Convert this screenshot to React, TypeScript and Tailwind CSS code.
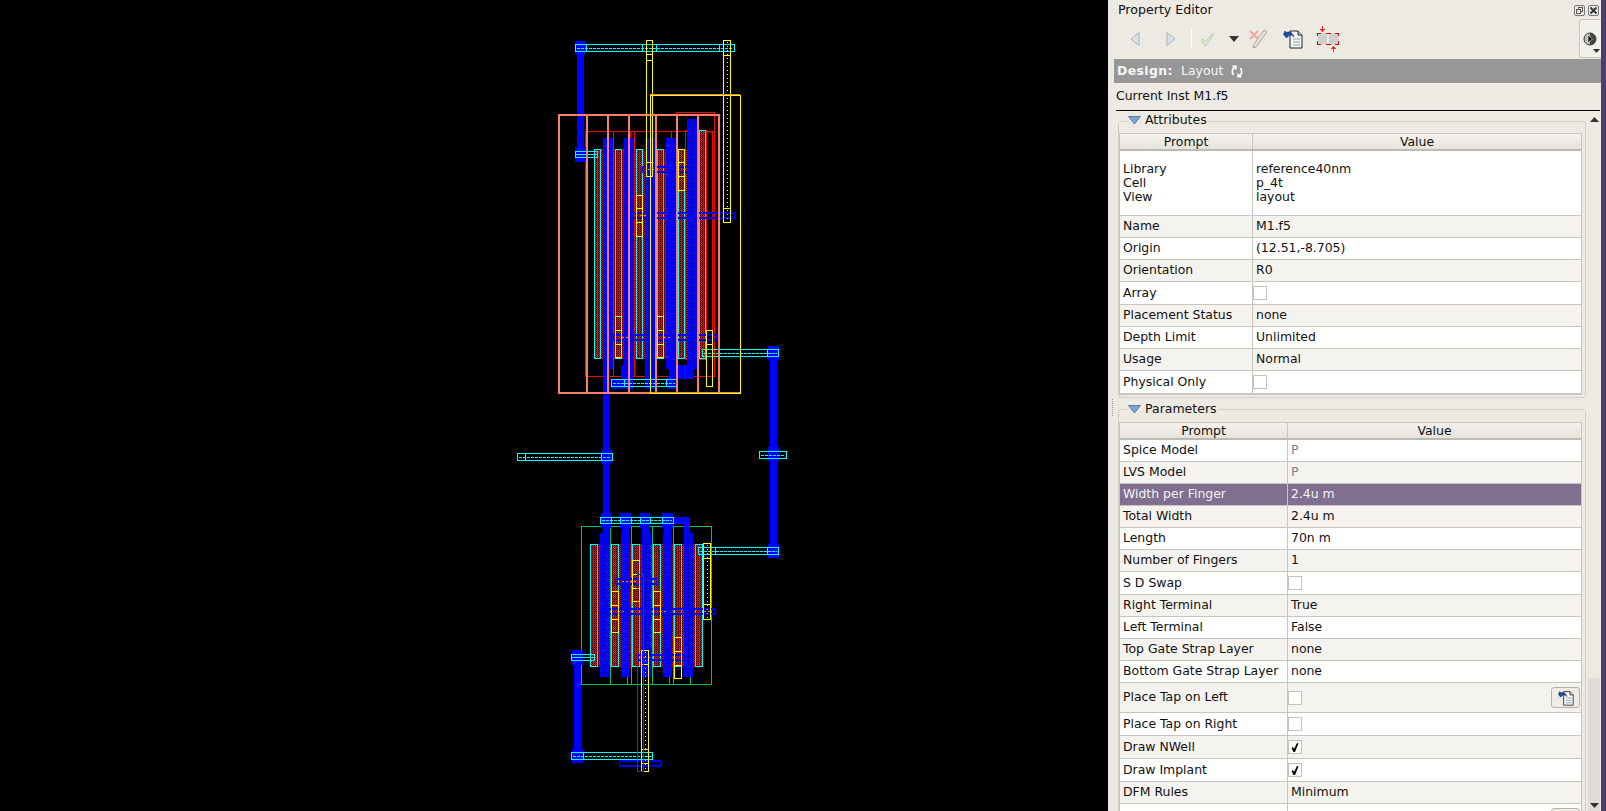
import type { ReactNode } from "react";

const FONT = "font-['DejaVu_Sans',sans-serif]";

type Box = [number, number, number, number];

const CYAN = "#00ffff";
const YELLOW = "#ffff00";
const BLUE = "#0000ff";
const RED = "#ff0000";
const SALMON = "#fa7d6e";
const GREEN = "#00c060";

// x1, y1, x2, y2 for everything below
const topDiff: Box[] = [
  [594, 149, 601, 359],
  [615, 149, 622, 359],
  [636, 149, 643, 359],
  [657, 149, 664, 359],
  [678, 149, 685, 359],
  [699, 130, 706, 359],
];
const topFingers: Box[] = [
  [603, 138, 613, 369],
  [624, 138, 634, 369],
  [645, 138, 655, 369],
  [666, 138, 676, 369],
  [687, 119, 697, 369],
];
const botDiff: Box[] = [
  [590, 544, 598, 667],
  [611, 544, 619, 667],
  [632, 544, 640, 667],
  [653, 544, 661, 667],
  [674, 544, 682, 667],
  [695, 544, 703, 667],
];
const botFingers: Box[] = [
  [600, 533, 609, 677],
  [621, 533, 630, 677],
  [642, 533, 651, 677],
  [663, 533, 672, 677],
  [684, 533, 693, 677],
];
const solidBlue: Box[] = [
  [577, 55, 584, 147],
  [575, 41, 586, 55],
  [575, 147, 586, 162],
  [603, 369, 610, 518],
  [601, 450, 612, 464],
  [621, 365, 633, 389],
  [645, 365, 655, 389],
  [667, 376, 677, 389],
  [669, 365, 694, 379],
  [611, 379, 624, 389],
  [770, 360, 777, 545],
  [768, 346, 779, 360],
  [768, 447, 779, 461],
  [768, 544, 779, 558],
  [603, 527, 609, 533],
  [622, 527, 629, 533],
  [642, 527, 649, 533],
  [664, 527, 671, 533],
  [601, 513, 611, 528],
  [620, 513, 631, 528],
  [640, 513, 650, 528],
  [662, 513, 673, 528],
  [674, 517, 690, 524],
  [684, 518, 690, 533],
  [574, 665, 581, 749],
  [572, 650, 583, 665],
  [572, 749, 583, 763],
];
const thinBlue: Box[] = [
  [642, 166, 689, 173],
  [630, 212, 735, 219],
  [613, 334, 717, 341],
  [615, 578, 657, 585],
  [600, 608, 715, 615],
  [638, 654, 684, 661],
  [619, 760, 661, 767],
];
const cyanStraps: Box[] = [
  [575, 44, 735, 52],
  [611, 379, 677, 387],
  [702, 349, 779, 357],
  [759, 451, 787, 459],
  [698, 547, 779, 555],
  [517, 453, 613, 461],
  [600, 517, 674, 524],
  [571, 752, 653, 760],
];
const cyanShort: Box[] = [
  [575, 151, 598, 158],
  [571, 654, 595, 661],
];
const cyanTicks: number[][] = [
  [586, 44, 52],
  [642, 44, 52],
  [656, 44, 52],
  [719, 44, 52],
  [624, 379, 387],
  [666, 379, 387],
  [718, 349, 357],
  [767, 349, 357],
  [698, 547, 555],
  [715, 547, 555],
  [767, 547, 555],
  [525, 453, 461],
  [601, 453, 461],
  [611, 517, 524],
  [620, 517, 524],
  [631, 517, 524],
  [640, 517, 524],
  [650, 517, 524],
  [662, 517, 524],
  [583, 752, 760],
];
const yellowBoxes: Box[] = [
  [678, 149, 685, 191],
  [636, 195, 643, 237],
  [615, 316, 622, 358],
  [657, 316, 664, 358],
  [706, 330, 713, 387],
  [646, 40, 653, 177],
  [646, 40, 653, 55],
  [646, 162, 653, 177],
  [611, 591, 619, 633],
  [632, 560, 640, 602],
  [653, 591, 661, 633],
  [674, 637, 682, 679],
];
const yellowTicks: number[][] = [
  [678, 685, 162],
  [678, 685, 176],
  [636, 643, 208],
  [636, 643, 222],
  [615, 622, 330],
  [615, 622, 344],
  [657, 664, 330],
  [657, 664, 344],
  [706, 713, 344],
  [646, 653, 60],
  [723, 731, 55],
  [723, 731, 208],
  [611, 619, 605],
  [611, 619, 619],
  [632, 640, 574],
  [632, 640, 588],
  [653, 661, 605],
  [653, 661, 619],
  [674, 682, 651],
  [674, 682, 665],
  [703, 711, 558],
  [703, 711, 604],
  [641, 649, 664],
  [641, 649, 749],
  [641, 649, 763],
];
const yellowDotted: Box[] = [
  [723, 40, 731, 223],
  [703, 543, 711, 620],
  [641, 650, 649, 772],
];
const redBoxes: Box[] = [
  [585, 131, 713, 377],
  [676, 112, 715, 377],
  [685, 130, 707, 360],
  [613, 131, 631, 377],
  [634, 131, 672, 377],
];
const salmonV = [558, 586, 607, 628, 655, 676, 697, 718];

function Outline({ b, color }: { b: Box; color: string }) {
  return (
    <rect
      x={b[0] + 0.5}
      y={b[1] + 0.5}
      width={b[2] - b[0] - 1}
      height={b[3] - b[1] - 1}
      fill="none"
      stroke={color}
    />
  );
}

function Fill({ b, fill }: { b: Box; fill: string }) {
  return <rect x={b[0]} y={b[1]} width={b[2] - b[0]} height={b[3] - b[1]} fill={fill} />;
}

function HStrap({ b, color }: { b: Box; color: string }) {
  const mid = Math.floor((b[1] + b[3]) / 2) + 0.5;
  return (
    <g>
      <Outline b={b} color={color} />
      <line x1={b[0] + 2} x2={b[2] - 2} y1={mid} y2={mid} stroke={color} strokeDasharray="3 1" />
    </g>
  );
}

function LayoutView() {
  return (
    <svg viewBox="0 0 1108 811" className="block h-[811px] w-[1108px]" shapeRendering="crispEdges">
      <defs>
        {/* diffusion: red diagonals with a few teal pixels on black */}
        <pattern id="hatch" width="4" height="4" patternUnits="userSpaceOnUse">
          <rect width="4" height="4" fill="#000" />
          <rect x="0" y="0" width="1" height="1" fill={RED} />
          <rect x="1" y="1" width="1" height="1" fill={RED} />
          <rect x="2" y="2" width="1" height="1" fill={RED} />
          <rect x="3" y="3" width="1" height="1" fill={RED} />
          <rect x="2" y="0" width="1" height="1" fill={RED} />
          <rect x="3" y="1" width="1" height="1" fill="#0e8a8a" />
          <rect x="0" y="2" width="1" height="1" fill={RED} />
          <rect x="1" y="3" width="1" height="1" fill="#0e8a8a" />
        </pattern>
        <pattern id="hatchRed" width="2" height="2" patternUnits="userSpaceOnUse">
          <rect width="2" height="2" fill="#000" />
          <rect x="0" y="0" width="1" height="1" fill={RED} />
          <rect x="1" y="1" width="1" height="1" fill={RED} />
        </pattern>
      </defs>

      {/* top device */}
      <rect x="594" y="149" width="112" height="210" fill="url(#hatchRed)" />
      {redBoxes.map((b, i) => (
        <Outline key={i} b={b} color={RED} />
      ))}
      {topDiff.map((b, i) => (
        <g key={i}>
          <Fill b={b} fill="url(#hatch)" />
          <Outline b={b} color={CYAN} />
        </g>
      ))}
      {/* bottom device */}
      <rect x="590" y="544" width="113" height="123" fill="url(#hatchRed)" />
      {botDiff.map((b, i) => (
        <g key={i}>
          <Fill b={b} fill="url(#hatch)" />
          <Outline b={b} color={CYAN} />
        </g>
      ))}

      <Outline b={[581, 526, 712, 685]} color={GREEN} />
      {[610, 631, 652, 673].map((x) => (
        <rect key={x} x={x} y="526" width="1" height="159" fill={GREEN} />
      ))}
      {[627, 669, 690].map((x) => (
        <rect key={x} x={x} y="677" width="1" height="8" fill={GREEN} />
      ))}

      {solidBlue.map((b, i) => (
        <Fill key={i} b={b} fill={BLUE} />
      ))}
      {[...topFingers, ...botFingers].map((b, i) => {
        const cx = Math.floor((b[0] + b[2]) / 2) + 0.5;
        return (
          <g key={i}>
            <Fill b={b} fill={BLUE} />
            <line x1={cx} x2={cx} y1={b[1] + 3} y2={b[3] - 3} stroke="#000" strokeDasharray="1 3" />
          </g>
        );
      })}
      <line x1="671" x2="693" y1="372.5" y2="372.5" stroke="#000" strokeDasharray="1 1" />

      {/* thin metal straps sit over the fingers, two pixels thick */}
      {thinBlue.map((b, i) => (
        <g key={i}>
          <Outline b={b} color={BLUE} />
          <rect x={b[0]} y={b[1] + 1} width={b[2] - b[0]} height="1" fill={BLUE} />
          <rect x={b[0]} y={b[3] - 2} width={b[2] - b[0]} height="1" fill={BLUE} />
        </g>
      ))}
      {/* orange where the straps cross the hatch */}
      {[
        [648, 169.5, 10],
        [640, 215.5, 8],
        [622, 337.5, 6],
        [664, 337.5, 6],
        [622, 581.5, 16],
        [618, 611.5, 6],
        [660, 611.5, 6],
        [704, 611.5, 8],
        [644, 657.5, 8],
      ].map((d, i) => (
        <line key={i} x1={d[0]} x2={d[0] + d[2]} y1={d[1]} y2={d[1]} stroke="#ff8000" strokeDasharray="2 2" />
      ))}

      {cyanStraps.map((b, i) => (
        <HStrap key={i} b={b} color={CYAN} />
      ))}
      {cyanShort.map((b, i) => (
        <g key={i}>
          <Outline b={b} color={CYAN} />
          <rect x={b[0]} y={b[1] + 3} width={b[2] - b[0]} height="1" fill={CYAN} />
        </g>
      ))}
      {cyanTicks.map((t, i) => (
        <rect key={i} x={t[0]} y={t[1]} width="1" height={t[2] - t[1]} fill={CYAN} />
      ))}

      {yellowBoxes.map((b, i) => (
        <Outline key={i} b={b} color={YELLOW} />
      ))}
      {yellowDotted.map((b, i) => {
        const cx = Math.floor((b[0] + b[2]) / 2) + 0.5;
        return (
          <g key={i}>
            <Outline b={b} color={YELLOW} />
            <line x1={cx} x2={cx} y1={b[1] + 2} y2={b[3] - 2} stroke={YELLOW} strokeDasharray="1 3" />
          </g>
        );
      })}
      {yellowTicks.map((t, i) => (
        <rect key={i} x={t[0]} y={t[2]} width={t[1] - t[0]} height="1" fill={YELLOW} />
      ))}

      <rect x="637.5" y="574.5" width="6" height="197" fill="none" stroke="#3c2fa8" />

      {/* salmon cells */}
      <rect x="558" y="114" width="161" height="2" fill={SALMON} />
      <rect x="558" y="392" width="182" height="2" fill={SALMON} />
      <rect x="650" y="94" width="90" height="2" fill={SALMON} />
      {salmonV.map((x) => (
        <rect key={x} x={x} y="114" width="2" height="279" fill={SALMON} />
      ))}
      <Outline b={[650, 95, 741, 394]} color={YELLOW} />
    </svg>
  );
}

function BackIcon({ flip }: { flip?: boolean }) {
  return (
    <svg width="14" height="16" viewBox="0 0 14 16" className={flip ? "-scale-x-100" : ""}>
      <path d="M11 1.5 L3 8 L11 14.5 Z" fill="#d8e0e8" stroke="#a8b4c0" strokeLinejoin="round" />
    </svg>
  );
}

function CheckIcon() {
  return (
    <svg width="16" height="16" viewBox="0 0 16 16">
      <path d="M2 9 L4.5 8 L6.5 11 L13.5 2.5 L14.5 3 L7.5 14.5 L5.5 14.5 Z" fill="#dcebcb" stroke="#aebfa0" strokeWidth="0.7" />
    </svg>
  );
}

function CancelIcon() {
  return (
    <svg width="20" height="20" viewBox="0 0 20 20">
      <path d="M15 1 L18 3 L7 18 L4 19 L5 15 Z" fill="#e8e4d0" stroke="#a8a498" />
      <path d="M1 2 L9 10 M9 2 L1 10" stroke="#f0a8a0" strokeWidth="2" />
    </svg>
  );
}

function UndoDocIcon({ small }: { small?: boolean }) {
  const size = small ? 16 : 20;
  return (
    <svg width={size} height={size} viewBox="0 0 20 20">
      <path d="M7 2 H15 L19 6 V19 H7 Z" fill="#f4f4f2" stroke="#222" />
      <path d="M15 2 V6 H19" fill="#ccc" stroke="#222" />
      <path d="M10 10 H17 M10 13 H17 M10 16 H17" stroke="#8aa0c0" />
      <path d="M0.5 5.5 L3.5 9 L5 7.2 C6.5 5.5 9 5.8 11 8 C10 4 6.5 2 3.5 3.5 L2 2 Z" fill="#1d4fa8" stroke="#0b2a66" strokeWidth="0.6" />
    </svg>
  );
}

function FitIcon() {
  return (
    <svg width="24" height="26" viewBox="0 0 24 26" shapeRendering="crispEdges">
      <rect x="2" y="8" width="9" height="10" fill="#cfcfcd" />
      <rect x="13" y="8" width="9" height="10" fill="#cfcfcd" />
      <path d="M5 7.5 H1.5 V10 M1.5 15 V18.5 H5 M9.5 7.5 H14.5 M9.5 18.5 H14.5 M19 7.5 H22.5 V10 M22.5 15 V18.5 H19" fill="none" stroke="#e00000" />
      <path d="M6.5 0 V6" stroke="#ff2020" />
      <path d="M4 3 H9 V4 H8 V5 H7 V6 H6 V5 H5 V4 H4 Z" fill="#ff2020" />
      <path d="M17.5 20 V26" stroke="#ff2020" />
      <path d="M15 23 H20 V22 H19 V21 H18 V20 H17 V21 H16 V22 H15 Z" fill="#ff2020" />
    </svg>
  );
}

function DialIcon() {
  return (
    <svg width="14" height="14" viewBox="0 0 14 14">
      <circle cx="7" cy="7" r="6" fill="#bdbdbd" stroke="#333" />
      <path d="M7 1 A6 6 0 0 1 7 13 Z" fill="#444" />
      <path d="M5 3 L9.5 7 L5 11 Z" fill="#111" stroke="#eee" strokeWidth="0.6" />
    </svg>
  );
}

function RefreshIcon() {
  return (
    <svg width="12" height="13" viewBox="0 0 12 13" fill="none" stroke="#fff" strokeWidth="1.7">
      <path d="M2.5 10 C0.5 7 1 3 4.5 1.5 M1.5 1 L5 1.5 L4.5 4.5" />
      <path d="M9.5 3 C11.5 6 11 10 7.5 11.5 M10.5 12 L7 11.5 L7.5 8.5" />
    </svg>
  );
}

function Triangle() {
  return (
    <svg width="13" height="9" viewBox="0 0 13 9">
      <path d="M0.5 0.5 H12.5 L6.5 8 Z" fill="#7ea4d4" stroke="#5c7fa8" />
    </svg>
  );
}

function Check({ checked }: { checked?: boolean }) {
  return (
    <span className="-ml-[3px] flex h-[14px] w-[14px] items-center justify-center border border-[#c6c3bd] bg-white">
      {checked && (
        <svg width="10" height="11" viewBox="0 0 10 11">
          <path d="M1.5 6 L3 5 L4 7 L7 1 L8.5 1.5 L5 10 L3.5 10 Z" fill="#000" />
        </svg>
      )}
    </span>
  );
}

type RowData = {
  prompt: ReactNode;
  value?: ReactNode;
  h: string;
  muted?: boolean;
  selected?: boolean;
  button?: boolean;
};

function PropRow({ row, alt, promptW }: { row: RowData; alt: boolean; promptW: string }) {
  const bg = row.selected ? "bg-[#806f8f] text-[#f4f2f6]" : alt ? "bg-[#f5f3ef]" : "bg-white";
  return (
    <div className={`flex border-b border-[#c9c6c0] ${row.h} ${bg}`}>
      <div className={`flex shrink-0 items-center border-r border-[#c9c6c0] pl-[3px] ${promptW}`}>{row.prompt}</div>
      <div className={`flex min-w-0 flex-1 items-center justify-between pl-[3px] ${row.muted ? "text-[#808080]" : ""}`}>
        {row.value}
        {row.button && (
          <span className="mr-[1px] flex h-[21px] w-[29px] items-center justify-center rounded-[3px] border border-[#b5b2ac] bg-[#eeebe5]">
            <UndoDocIcon small />
          </span>
        )}
      </div>
    </div>
  );
}

const attrRows: RowData[] = [
  {
    prompt: (
      <div className="leading-[14px]">
        Library
        <br />
        Cell
        <br />
        View
      </div>
    ),
    value: (
      <div className="leading-[14px]">
        reference40nm
        <br />
        p_4t
        <br />
        layout
      </div>
    ),
    h: "h-[65px]",
  },
  { prompt: "Name", value: "M1.f5", h: "h-[22px]" },
  { prompt: "Origin", value: "(12.51,-8.705)", h: "h-[22px]" },
  { prompt: "Orientation", value: "R0", h: "h-[22px]" },
  { prompt: "Array", value: <Check />, h: "h-[23px]" },
  { prompt: "Placement Status", value: "none", h: "h-[22px]" },
  { prompt: "Depth Limit", value: "Unlimited", h: "h-[22px]" },
  { prompt: "Usage", value: "Normal", h: "h-[22px]" },
  { prompt: "Physical Only", value: <Check />, h: "h-[23px]" },
];

const paramRows: RowData[] = [
  { prompt: "Spice Model", value: "P", h: "h-[22px]", muted: true },
  { prompt: "LVS Model", value: "P", h: "h-[22px]", muted: true },
  { prompt: "Width per Finger", value: "2.4u m", h: "h-[22px]", selected: true },
  { prompt: "Total Width", value: "2.4u m", h: "h-[22px]" },
  { prompt: "Length", value: "70n m", h: "h-[22px]" },
  { prompt: "Number of Fingers", value: "1", h: "h-[22px]" },
  { prompt: "S D Swap", value: <Check />, h: "h-[23px]" },
  { prompt: "Right Terminal", value: "True", h: "h-[22px]" },
  { prompt: "Left Terminal", value: "False", h: "h-[22px]" },
  { prompt: "Top Gate Strap Layer", value: "none", h: "h-[22px]" },
  { prompt: "Bottom Gate Strap Layer", value: "none", h: "h-[22px]" },
  { prompt: "Place Tap on Left", value: <Check />, h: "h-[30px]", button: true },
  { prompt: "Place Tap on Right", value: <Check />, h: "h-[23px]" },
  { prompt: "Draw NWell", value: <Check checked />, h: "h-[23px]" },
  { prompt: "Draw Implant", value: <Check checked />, h: "h-[23px]" },
  { prompt: "DFM Rules", value: "Minimum", h: "h-[22px]" },
  { prompt: "", value: <Check />, h: "h-[30px]", button: true },
];

function PropGroup({
  title,
  rows,
  promptW,
  className,
  labelTop,
}: {
  title: string;
  rows: RowData[];
  promptW: string;
  className: string;
  labelTop: string;
}) {
  return (
    <div className={`relative rounded-[3px] border border-[#d2cfc9] pr-[3px] ${className}`}>
      <div className={`absolute left-[8px] flex items-center gap-[4px] bg-[#edeae4] px-[1px] text-[12.5px] leading-[16px] ${labelTop}`}>
        <Triangle />
        {title}
      </div>
      <div className="border border-[#c9c6c0]">
        <div className="flex h-[17px] border-b-2 border-[#bdbab4] bg-gradient-to-b from-[#f4f2ee] to-[#e6e3dd] text-center leading-[16px]">
          <div className={`shrink-0 border-r border-[#c9c6c0] ${promptW}`}>Prompt</div>
          <div className="flex-1">Value</div>
        </div>
        {rows.map((row, i) => (
          <PropRow key={i} row={row} alt={i % 2 === 1} promptW={promptW} />
        ))}
      </div>
    </div>
  );
}

function PropertyEditor() {
  return (
    <div className={`flex h-[811px] w-[498px] bg-[#4b3f6e] ${FONT}`}>
      <div className="flex h-full w-[493px] flex-col overflow-hidden bg-[#edeae4] text-[12.45px] text-[#111]">
        {/* title */}
        <div className="flex h-[19px] items-center justify-between pl-[10px] pr-[2px] pt-[1px] text-[12.6px]">
          <span>Property Editor</span>
          <div className="flex gap-[3px]">
            <span className="flex h-[11px] w-[11px] items-center justify-center rounded-[2px] border border-[#777]">
              <svg width="7" height="7" viewBox="0 0 7 7" fill="none" stroke="#555">
                <rect x="2.5" y="0.5" width="4" height="4" />
                <rect x="0.5" y="2.5" width="4" height="4" fill="#edeae4" />
              </svg>
            </span>
            <span className="flex h-[11px] w-[11px] items-center justify-center rounded-[2px] border border-[#777]">
              <svg width="7" height="7" viewBox="0 0 7 7" stroke="#333" strokeWidth="2">
                <path d="M0.5 0.5 L6.5 6.5 M6.5 0.5 L0.5 6.5" />
              </svg>
            </span>
          </div>
        </div>
        {/* toolbar */}
        <div className="flex h-[40px] items-center pl-[20px]">
          <div className="w-[14px]"><BackIcon /></div>
          <div className="ml-[22px] w-[14px]"><BackIcon flip /></div>
          <div className="ml-[13px] h-[20px] w-px bg-white" />
          <div className="ml-[7px]"><CheckIcon /></div>
          <svg width="10" height="6" viewBox="0 0 10 6" className="ml-[14px]">
            <path d="M0 0 H10 L5 6 Z" fill="#333" />
          </svg>
          <div className="ml-[10px]"><CancelIcon /></div>
          <div className="ml-[14px]"><UndoDocIcon /></div>
          <div className="ml-[13px]"><FitIcon /></div>
          <div className="relative ml-auto h-[39px] w-[22px] self-start rounded-l-[3px] border border-r-0 border-[#c9c6c0] bg-[#f2f0eb]">
            <div className="absolute left-[3px] top-[12px]"><DialIcon /></div>
            <svg width="7" height="4" viewBox="0 0 7 4" className="absolute bottom-[4px] right-[1px]">
              <path d="M0 0 H7 L3.5 4 Z" fill="#333" />
            </svg>
          </div>
        </div>
        {/* design bar */}
        <div className="ml-[6px] flex h-[24px] items-center bg-[#979797] pl-[3px] text-[#f6f6f6]">
          <span className="w-[64px] font-bold tracking-[0.4px]">Design:</span>
          <span className="mr-[8px]">Layout</span>
          <RefreshIcon />
        </div>
        <div className="flex h-[27px] items-center pl-[8px]">Current Inst M1.f5</div>
        <div className="ml-[8px] mr-[1px] h-[1px] bg-black" />
        <div className="h-px" />
        {/* property groups */}
        <div className="flex min-h-0 flex-1 pl-[10px] pr-[1px]">
          <div className="w-[468px] shrink-0 pt-[9px]">
            <PropGroup title="Attributes" rows={attrRows} promptW="w-[133px]" labelTop="-top-[10px]" className="h-[277px] pt-[11px]" />
            <div className="relative mt-[11px]">
              <div className="absolute -left-[6px] -top-[10px] h-[17px] w-[2px] border-l border-dotted border-[#999]" />
              <PropGroup title="Parameters" rows={paramRows} promptW="w-[168px]" labelTop="-top-[9px]" className="pt-[12px]" />
            </div>
          </div>
          {/* scrollbar */}
          <div className="ml-[2px] flex flex-1 flex-col">
            <div className="flex h-[14px] items-center justify-center">
              <svg width="9" height="5" viewBox="0 0 9 5"><path d="M0 5 H9 L4.5 0 Z" fill="#333" /></svg>
            </div>
            <div className="w-full flex-1 bg-[#edeae4]" />
            <div className="flex h-[133px] w-full items-end justify-center bg-[#dfdcd7] pb-[3px]">
              <svg width="9" height="5" viewBox="0 0 9 5"><path d="M0 0 H9 L4.5 5 Z" fill="#333" /></svg>
            </div>
          </div>
        </div>
      </div>
    </div>
  );
}

export default function App() {
  return (
    <div className="flex h-[811px] w-[1606px] overflow-hidden bg-black">
      <LayoutView />
      <PropertyEditor />
    </div>
  );
}
